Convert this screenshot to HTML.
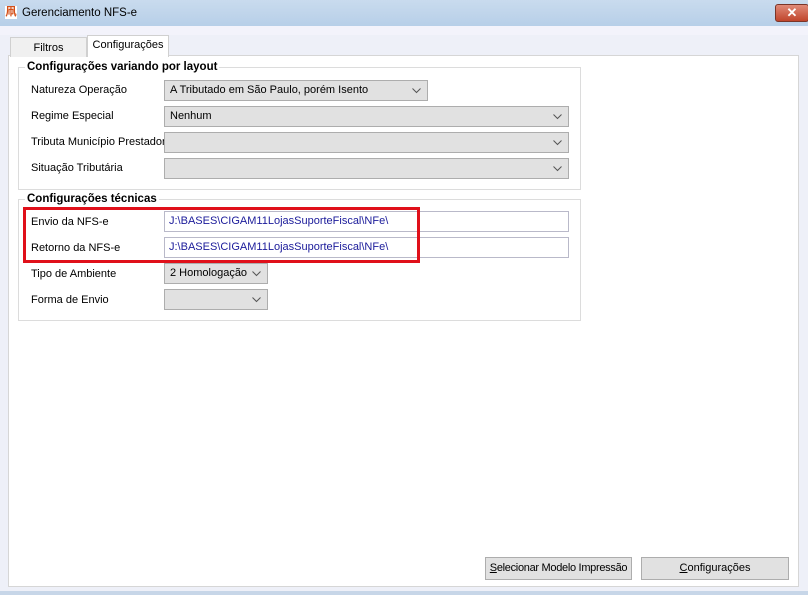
<!DOCTYPE html>
<html><head><style>
*{box-sizing:border-box;margin:0;padding:0}
body{width:808px;height:595px;background:#eef0f8;font-family:"Liberation Sans",sans-serif;font-size:11px;color:#000;position:relative;overflow:hidden;white-space:nowrap}
.abs{position:absolute}
.title{left:0;top:0;width:808px;height:26px;background:linear-gradient(#c9dbee,#b7cfe8);}
.panel{left:8px;top:55px;width:791px;height:532px;background:#fff;border:1px solid #d6d6d6}
.tab{height:20px;border:1px solid #d0d0d0;border-bottom:none;text-align:center;line-height:19px}
.grp{border:1px solid #dcdcdc}
.gt{font-weight:bold;font-size:11.5px;background:#fff;padding:0 2px}
.lbl{left:31px;font-size:11px}
.cb{height:21px;background:#e1e1e1;border:1px solid #adadad;padding-left:5px;line-height:19px}
.cb svg{position:absolute;right:6px;top:7px}
.tb{height:21px;background:#fff;border:1px solid #b9b9c9;padding-left:4px;line-height:19px;color:#1a1a9a;font-size:11px}
.btn{height:23px;background:#e1e1e1;border:1px solid #adadad;text-align:center;line-height:21px}
</style></head><body>
<div class="abs title"></div>
<div class="abs" style="left:5px;top:6px;width:12px;height:13px;background:#fff;color:#d4501a;font-size:11px;font-weight:bold;line-height:13px;text-align:center">凧</div>
<div class="abs" style="left:22px;top:7px;font-size:11.5px">Gerenciamento NFS-e</div>
<div class="abs" style="left:775px;top:4px;width:34px;height:18px;background:linear-gradient(#e08a78,#c0452c);border:1px solid #7a3528;border-radius:3px;color:#fff;font-weight:bold;text-align:center;line-height:16px;font-size:13px">✕</div>
<div class="abs" style="left:0;top:26px;width:808px;height:9px;background:#f3f3fb"></div>
<div class="abs panel"></div>
<div class="abs tab" style="left:10px;top:37px;width:77px;background:#f0f0f0;line-height:20px">Filtros</div>
<div class="abs tab" style="left:87px;top:35px;width:82px;height:22px;background:#fff">Configurações</div>

<div class="abs grp" style="left:18px;top:67px;width:563px;height:123px"></div>
<div class="abs gt" style="left:25px;top:61px">Configurações variando por layout</div>
<div class="abs lbl" style="top:84px">Natureza Operação</div>
<div class="abs cb" style="left:164px;top:80px;width:264px">A Tributado em São Paulo, porém Isento<svg width="9" height="6"><path d="M0.5 0.5L4.5 4.5L8.5 0.5" fill="none" stroke="#555"/></svg></div>
<div class="abs lbl" style="top:110px">Regime Especial</div>
<div class="abs cb" style="left:164px;top:106px;width:405px">Nenhum<svg width="9" height="6"><path d="M0.5 0.5L4.5 4.5L8.5 0.5" fill="none" stroke="#555"/></svg></div>
<div class="abs lbl" style="top:136px">Tributa Município Prestador</div>
<div class="abs cb" style="left:164px;top:132px;width:405px"><svg width="9" height="6"><path d="M0.5 0.5L4.5 4.5L8.5 0.5" fill="none" stroke="#555"/></svg></div>
<div class="abs lbl" style="top:162px">Situação Tributária</div>
<div class="abs cb" style="left:164px;top:158px;width:405px"><svg width="9" height="6"><path d="M0.5 0.5L4.5 4.5L8.5 0.5" fill="none" stroke="#555"/></svg></div>

<div class="abs grp" style="left:18px;top:199px;width:563px;height:122px"></div>
<div class="abs gt" style="left:25px;top:193px">Configurações técnicas</div>
<div class="abs lbl" style="top:216px">Envio da NFS-e</div>
<div class="abs tb" style="left:164px;top:211px;width:405px">J:\BASES\CIGAM11LojasSuporteFiscal\NFe\</div>
<div class="abs lbl" style="top:242px">Retorno da NFS-e</div>
<div class="abs tb" style="left:164px;top:237px;width:405px">J:\BASES\CIGAM11LojasSuporteFiscal\NFe\</div>
<div class="abs" style="left:23px;top:207px;width:397px;height:56px;border:3px solid #e0101a"></div>
<div class="abs lbl" style="top:268px">Tipo de Ambiente</div>
<div class="abs cb" style="left:164px;top:263px;width:104px">2 Homologação<svg width="9" height="6"><path d="M0.5 0.5L4.5 4.5L8.5 0.5" fill="none" stroke="#555"/></svg></div>
<div class="abs lbl" style="top:294px">Forma de Envio</div>
<div class="abs cb" style="left:164px;top:289px;width:104px"><svg width="9" height="6"><path d="M0.5 0.5L4.5 4.5L8.5 0.5" fill="none" stroke="#555"/></svg></div>

<div class="abs btn" style="left:485px;top:557px;width:147px;letter-spacing:-0.3px"><u>S</u>elecionar Modelo Impressão</div>
<div class="abs btn" style="left:641px;top:557px;width:148px"><u>C</u>onfigurações</div>
<div class="abs" style="left:0;top:591px;width:808px;height:4px;background:#c7d6e8"></div>
</body></html>
